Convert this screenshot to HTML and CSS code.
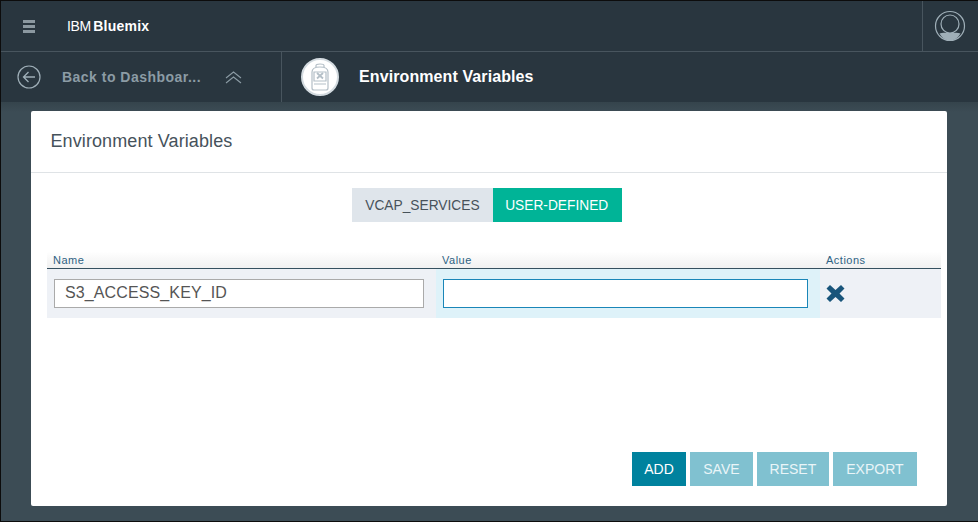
FILE: index.html
```html
<!DOCTYPE html>
<html lang="en">

<head>
    <meta charset="UTF-8">
    <meta name="viewport" content="width=device-width, initial-scale=1.0">
    <title>Environment Variables</title>
    <link rel="stylesheet" href="styles.css">
</head>

<body>

    <div class="window">
        <header class="top-bar">
            <div class="menu-icon"><span></span><span></span><span></span></div>
            <div class="brand">IBM <b>Bluemix</b></div>
            <div class="avatar-box">
                <svg width="32" height="32" viewBox="0 0 32 32" fill="none">
                    <circle cx="16" cy="16" r="14.500" stroke="#9fafb8" stroke-width="1.200"/>
                    <circle cx="16" cy="14" r="9" stroke="#9fafb8" stroke-width="1.200"/>
                    <path d="M5.500 23.500 C9 22 11 23 16 23 C21 23 23 22 26.500 23.500 C24 28 20 30.500 16 30.500 C12 30.500 8 28 5.500 23.500 Z" fill="#9fafb8"/>
                </svg>
            </div>
        </header>

        <nav class="sub-bar">
            <div class="back">
                <svg class="back-icon" width="24" height="24" viewBox="0 0 24 24" fill="none" stroke="#9fafb8">
                    <circle cx="12" cy="12" r="11" stroke-width="1.200"/>
                    <path d="M18 12H6.500M11.500 7L6.500 12L11.500 17" stroke-width="1.300"/>
                </svg>
                <span class="back-label">Back to Dashboar...</span>
                <svg class="chevrons" width="17" height="13" viewBox="0 0 17 13" fill="none" stroke="#8c9ca5" stroke-width="1.100">
                    <path d="M1 7L8.500 1L16 7M1 12L8.500 6L16 12"/>
                </svg>
            </div>
            <div class="page-title">
                <div class="service-badge">
                    <svg width="20" height="28" viewBox="0 0 20 28" fill="none" stroke="#b4bfc7" stroke-width="1.200">
                        <path d="M6 4V2.500C6 1.500 7 1 10 1C13 1 14 1.500 14 2.500V4"/>
                        <path d="M2 9C2 5.500 5 4 10 4C15 4 18 5.500 18 9V25C18 26.200 17.200 27 16 27H4C2.800 27 2 26.200 2 25Z"/>
                        <path d="M4 9H16V18H4ZM4 21H16"/>
                        <path d="M7 10L13 15.500M13 10L7 15.500" stroke-width="1.800"/>
                    </svg>
                </div>
                <h1>Environment Variables</h1>
            </div>
        </nav>

        <main class="content">
            <section class="card">
                <h2 class="card-title">Environment Variables</h2>

                <div class="tabs">
                    <div class="tab">VCAP_SERVICES</div>
                    <div class="tab tab-active">USER-DEFINED</div>
                </div>

                <div class="var-table">
                    <div class="table-head">
                        <div class="col-name">Name</div>
                        <div class="col-value">Value</div>
                        <div class="col-actions">Actions</div>
                    </div>
                    <div class="table-row">
                        <div class="col-name"><input class="field" type="text" value="S3_ACCESS_KEY_ID"></div>
                        <div class="col-value"><input class="field field-focus" type="text"></div>
                        <div class="col-actions">
                            <svg class="remove-icon" width="19" height="17" viewBox="0 0 19 17" fill="#19557b">
                                <path d="M0.500 3.500L4 0L9.500 5L15 0L18.500 3.500L13.500 8.500L18.500 13.500L15 17L9.500 12L4 17L0.500 13.500L5.500 8.500Z"/>
                            </svg>
                        </div>
                    </div>
                </div>

                <div class="buttons">
                    <button class="btn btn-add" type="button">ADD</button>
                    <button class="btn btn-off" type="button">SAVE</button>
                    <button class="btn btn-off" type="button">RESET</button>
                    <button class="btn btn-off" type="button">EXPORT</button>
                </div>
            </section>
        </main>
    </div>

</body>

</html>
```

FILE: styles.css
```css
* {
    box-sizing: border-box;
}

html,
body {
    margin: 0;
    padding: 0;
}

body {
    font-family: 'Liberation Sans', Arial, sans-serif;
    background-color: #3c4c55;
}

.window {
    width: 978px;
    height: 522px;
    display: flex;
    flex-direction: column;
    border: 1px solid #0c0c0c;
    border-right-width: 0;
    overflow: hidden;
}

.top-bar {
    height: 51px;
    flex: none;
    display: flex;
    align-items: center;
    background-color: #29363f;
    border-bottom: 1px solid #48555e;
}

.menu-icon {
    width: 12px;
    margin-left: 22px;
    display: flex;
    flex-direction: column;
    gap: 2px;
}

.menu-icon span {
    height: 3px;
    background-color: #8b98a0;
}

.brand {
    margin-left: 32px;
    font-size: 14px;
    letter-spacing: -0.4px;
    word-spacing: -1px;
    color: #ffffff;
}

.brand b {
    letter-spacing: 0.25px;
}

.avatar-box {
    margin-left: auto;
    width: 56px;
    height: 50px;
    padding-right: 2px;
    display: flex;
    align-items: center;
    justify-content: center;
    border-left: 1px solid #48555e;
}

.sub-bar {
    height: 50px;
    flex: none;
    display: flex;
    background-color: #29363f;
}

.back {
    width: 281px;
    display: flex;
    align-items: center;
    border-right: 1px solid #48555e;
}

.back-icon {
    margin-left: 16px;
}

.back-label {
    margin-left: 21px;
    font-size: 14px;
    font-weight: bold;
    letter-spacing: 0.48px;
    color: #8c9ca5;
    white-space: nowrap;
}

.chevrons {
    margin-left: 24px;
}

.page-title {
    display: flex;
    align-items: center;
}

.service-badge {
    width: 38px;
    height: 38px;
    margin-left: 19px;
    display: flex;
    align-items: center;
    justify-content: center;
    background-color: #ffffff;
    border: 2px solid #d3dbe0;
    border-radius: 50%;
}

.page-title h1 {
    margin: 0 0 0 20px;
    font-size: 16px;
    font-weight: bold;
    letter-spacing: 0.1px;
    color: #ffffff;
}

.content {
    flex: 1;
    padding: 9px 31px 15px 30px;
    background: linear-gradient(#35444c, #3c4c55 10px);
}

.card {
    height: 395px;
    display: flex;
    flex-direction: column;
    background-color: #ffffff;
    border-radius: 2px;
}

.card-title {
    height: 62px;
    margin: 0;
    padding: 20px 20px 0 19.500px;
    font-size: 18px;
    line-height: 21px;
    font-weight: normal;
    letter-spacing: 0.1px;
    color: #46525b;
    border-bottom: 1px solid #dfe3e6;
}

.tabs {
    margin-top: 15px;
    display: flex;
    justify-content: center;
    padding-right: 4px;
}

.tab {
    height: 34px;
    padding: 0 13px;
    font-size: 13.750px;
    line-height: 35px;
    color: #47525a;
    background-color: #dfe5eb;
}

.tab:last-child {
    padding: 0 13.500px 0 12.500px;
}

.tab-active {
    color: #ffffff;
    background-color: #00b497;
}

.var-table {
    margin: 24px 6px 0 16px;
}

.table-head {
    height: 23px;
    padding-top: 6px;
    display: flex;
    font-size: 11px;
    line-height: 17px;
    letter-spacing: 0.5px;
    color: #2e6283;
    background: linear-gradient(#ffffff 25%, #f0f0f0);
    border-bottom: 1px solid #35505f;
}

.table-row {
    height: 49px;
    display: flex;
    background-color: #eef1f6;
}

.col-name {
    width: 389px;
    padding-left: 6px;
}

.col-value {
    width: 384px;
    padding-left: 6px;
}

.col-actions {
    flex: 1;
    padding-left: 6px;
}

.table-row .col-name,
.table-row .col-value {
    padding-top: 10px;
    padding-left: 7px;
}

.table-row .col-value {
    background-color: #def2f9;
}

.table-row .col-actions {
    padding-top: 16px;
}

.remove-icon {
    display: block;
}

.field {
    display: block;
    width: 370px;
    height: 29px;
    padding: 0 10px 2px;
    font-family: inherit;
    font-size: 16px;
    letter-spacing: 0.12px;
    color: #555555;
    background-color: #ffffff;
    border: 1px solid #aaaaaa;
    border-radius: 0;
    outline: none;
}

.field-focus {
    width: 365px;
    border-color: #1a86b8;
}

.buttons {
    margin-top: auto;
    margin-bottom: 20px;
    padding-right: 30.450px;
    display: flex;
    justify-content: flex-end;
    gap: 4px;
}

.btn {
    height: 34px;
    padding: 0 13px;
    font-family: inherit;
    font-size: 14px;
    color: #ffffff;
    background-color: #00829e;
    border: none;
    border-radius: 0;
}

.btn-add {
    padding: 0 12.500px;
}

.btn-off {
    color: #eaf5f8;
    background-color: #80c1d0;
}
```
